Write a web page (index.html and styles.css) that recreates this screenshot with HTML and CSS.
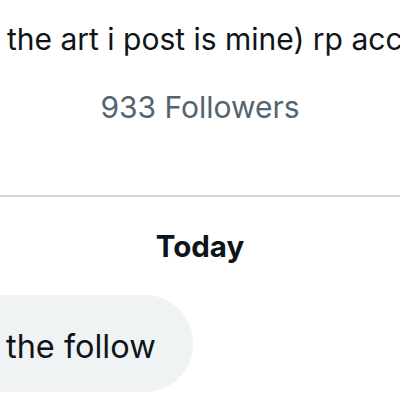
FILE: index.html
```html
<!DOCTYPE html>
<html>
<head>
<meta charset="utf-8">
<link rel="stylesheet" href="styles.css">
</head>
<body>
<div class="page">
  <div class="profile">
    <div class="bio">the art i post is mine) rp account</div>
    <div class="followers">933 Followers</div>
  </div>
  <div class="divider"></div>
  <div class="day">Today</div>
  <div class="thread">
    <div class="bubble">the follow</div>
  </div>
</div>
</body>
</html>
```
FILE: styles.css
```css
html, body {
  margin: 0;
  padding: 0;
  background: #ffffff;
}
.page {
  width: 400px;
  height: 400px;
  overflow: hidden;
  font-family: Inter, Roboto, sans-serif;
  color: #0f1419;
}
.profile {
  display: flex;
  flex-direction: column;
  padding-top: 19px;
}
.bio {
  white-space: nowrap;
  overflow: hidden;
  padding-left: 7px;
  font-size: 30px;
  line-height: 40px;
}
.followers {
  margin-top: 28px;
  text-align: center;
  font-size: 30px;
  line-height: 40px;
  color: #536471;
}
.divider {
  margin-top: 68px;
  height: 2px;
  background: #cfd9de;
}
.day {
  margin-top: 29px;
  text-align: center;
  font-weight: 700;
  font-size: 29.5px;
  line-height: 40px;
}
.thread {
  display: flex;
  margin-top: 29px;
}
.bubble {
  margin-left: -60px;
  padding: 6px 37px 0 66px;
  height: 91px;
  display: flex;
  align-items: center;
  background: #eff3f4;
  border-radius: 48px;
  font-size: 32.5px;
  line-height: 38px;
}
```
